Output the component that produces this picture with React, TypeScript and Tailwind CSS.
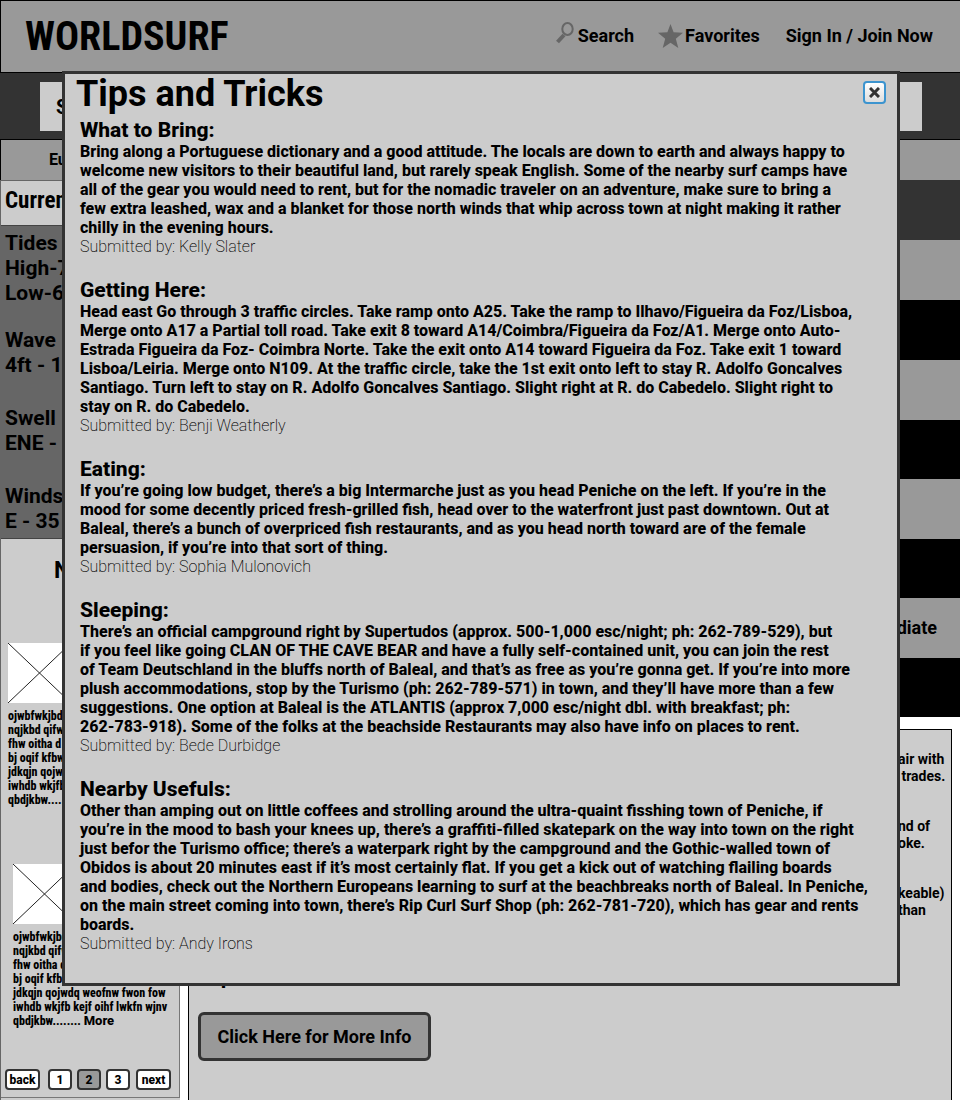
import React from 'react';

const tips = [
  {
    title: 'What to Bring:',
    author: 'Kelly Slater',
    body: `Bring along a Portuguese dictionary and a good attitude. The locals are down to earth and always happy to
welcome new visitors to their beautiful land, but rarely speak English. Some of the nearby surf camps have
all of the gear you would need to rent, but for the nomadic traveler on an adventure, make sure to bring a
few extra leashed, wax and a blanket for those north winds that whip across town at night making it rather
chilly in the evening hours.`,
  },
  {
    title: 'Getting Here:',
    author: 'Benji Weatherly',
    body: `Head east Go through 3 traffic circles. Take ramp onto A25. Take the ramp to Ilhavo/Figueira da Foz/Lisboa,
Merge onto A17 a Partial toll road. Take exit 8 toward A14/Coimbra/Figueira da Foz/A1. Merge onto Auto-
Estrada Figueira da Foz- Coimbra Norte. Take the exit onto A14 toward Figueira da Foz. Take exit 1 toward
Lisboa/Leiria. Merge onto N109. At the traffic circle, take the 1st exit onto left to stay R. Adolfo Goncalves
Santiago. Turn left to stay on R. Adolfo Goncalves Santiago. Slight right at R. do Cabedelo. Slight right to
stay on R. do Cabedelo.`,
  },
  {
    title: 'Eating:',
    author: 'Sophia Mulonovich',
    body: `If you’re going low budget, there’s a big Intermarche just as you head Peniche on the left. If you’re in the
mood for some decently priced fresh-grilled fish, head over to the waterfront just past downtown. Out at
Baleal, there’s a bunch of overpriced fish restaurants, and as you head north toward are of the female
persuasion, if you’re into that sort of thing.`,
  },
  {
    title: 'Sleeping:',
    author: 'Bede Durbidge',
    body: `There’s an official campground right by Supertudos (approx. 500-1,000 esc/night; ph: 262-789-529), but
if you feel like going CLAN OF THE CAVE BEAR and have a fully self-contained unit, you can join the rest
of Team Deutschland in the bluffs north of Baleal, and that’s as free as you’re gonna get. If you’re into more
plush accommodations, stop by the Turismo (ph: 262-789-571) in town, and they’ll have more than a few
suggestions. One option at Baleal is the ATLANTIS (approx 7,000 esc/night dbl. with breakfast; ph:
262-783-918). Some of the folks at the beachside Restaurants may also have info on places to rent.`,
  },
  {
    title: 'Nearby Usefuls:',
    author: 'Andy Irons',
    body: `Other than amping out on little coffees and strolling around the ultra-quaint fisshing town of Peniche, if
you’re in the mood to bash your knees up, there’s a graffiti-filled skatepark on the way into town on the right
just befor the Turismo office; there’s a waterpark right by the campground and the Gothic-walled town of
Obidos is about 20 minutes east if it’s most certainly flat. If you get a kick out of watching flailing boards
and bodies, check out the Northern Europeans learning to surf at the beachbreaks north of Baleal. In Peniche,
on the main street coming into town, there’s Rip Curl Surf Shop (ph: 262-781-720), which has gear and rents
boards.`,
  },
];

const conditions = [
  ['Tides', 'High-7', 'Low-6'],
  ['Wave', '4ft - 10'],
  ['Swell', 'ENE - 9'],
  ['Winds', 'E - 35'],
];

const newsText = `ojwbfwkjbd
nqjkbd qifw
fhw oitha d
bj oqif kfbw
jdkqjn qojwdq weofnw fwon fow
iwhdb wkjfb kejf oihf lwkfn wjnv
qbdjkbw........ `;

const notes = ['air with\n trades.', 'nd of\noke.', 'keable)\nthan'];

function NewsItem({ indent }: { indent: string }) {
  return (
    <article className={indent}>
      <svg className="block h-[60px] w-[63px] bg-white" viewBox="0 0 63 60" aria-hidden="true">
        <path d="M0 0 63 60M0 60 63 0" stroke="#222" strokeWidth="1" />
      </svg>
      <p className="mt-[6px] h-[101px] whitespace-pre font-['Roboto_Condensed','Roboto'] text-[12px] leading-[14px] font-extrabold">
        {newsText}
        <a href="#news" className="font-['Roboto'] text-[13px]">More</a>
      </p>
    </article>
  );
}

function PageButton({ label, active = false }: { label: string; active?: boolean }) {
  const tone = active ? 'bg-[#999]' : 'bg-white';
  return (
    <button className={`h-[21px] rounded-[4px] border-2 border-[#333] text-[12px] leading-[16px] font-extrabold ${tone} ${label.length > 1 ? 'w-[35px]' : 'w-6'}`}>
      {label}
    </button>
  );
}

function Header() {
  return (
    <header className="flex h-[72px] items-center justify-between border-t border-l border-black bg-[#999] pr-[27px] pl-6">
      <a href="#home" className="font-['Roboto_Condensed','Liberation_Sans_Narrow'] text-[40px] font-bold">WORLDSURF</a>
      <nav className="flex items-center pb-[2px] text-[18px] font-bold">
        <a href="#search" className="flex items-center gap-1">
          <svg className="mb-[6px] h-[22px] w-[18px]" viewBox="0 0 18 22" fill="none" stroke="#666" aria-hidden="true">
            <ellipse cx="11.5" cy="7" rx="5.2" ry="6" strokeWidth="2" />
            <path d="M8 13 1.500 20" strokeWidth="4" />
          </svg>
          Search
        </a>
        <a href="#favorites" className="ml-6 flex items-center gap-[2px]">
          <svg className="h-[24px] w-[25px]" viewBox="0 0 25 24" fill="#666" aria-hidden="true">
            <path d="m12.5 0 3.100 8.300 9.400.5-7.200 6 2.500 9.200-7.800-5.300L4.700 24l2.500-9.200L0 8.800l9.400-.5z" />
          </svg>
          Favorites
        </a>
        <a href="#signin" className="ml-[26px]">Sign In / Join Now</a>
      </nav>
    </header>
  );
}

function Sidebar() {
  return (
    <aside className="flex w-[180px] shrink-0 flex-col border-l border-[#666] bg-[#ccc]">
      <h2 className="h-[45px] border-t border-[#666] pl-1 font-['Roboto_Condensed','Roboto'] text-[23px] leading-[40px] font-bold">Current</h2>
      <div className="flex h-[314px] flex-col gap-[28px] border-y border-[#444] bg-[#666] pt-[5px] pl-1 text-[21px] leading-[25px] font-bold">
        {conditions.map((lines, i) => (
          <p key={lines[0]} className={i === 0 ? '-mb-[6px]' : ''}>
            {lines.map((line) => <span key={line} className="block whitespace-nowrap">{line}</span>)}
          </p>
        ))}
      </div>
      <div className="flex h-[559px] flex-col border-r border-b border-[#777]">
        <h2 className="pt-[17px] pl-[53px] text-[23px] leading-[30px] font-bold">News</h2>
        <div className="mt-[57px] flex flex-col gap-[54px]">
          <NewsItem indent="pl-[7px]" />
          <NewsItem indent="pl-3" />
        </div>
        <div className="mt-auto mb-[7px] flex items-center pl-1">
          <PageButton label="back" />
          <div className="mr-[6px] ml-2 flex gap-[5px]">
            <PageButton label="1" />
            <PageButton label="2" active />
            <PageButton label="3" />
          </div>
          <PageButton label="next" />
        </div>
      </div>
    </aside>
  );
}

function MainColumn() {
  return (
    <main className="flex flex-1 flex-col bg-white">
      <div className="grid h-[537px] grid-rows-[60px_60px_60px_repeat(6,minmax(0,1fr))] text-[18px] font-bold">
        <div className="bg-[#333]" />
        <div className="bg-[#999]" />
        <div className="bg-black" />
        <div className="bg-[#999]" />
        <div className="bg-black" />
        <div className="bg-[#999]" />
        <div className="bg-black" />
        <div className="flex items-center justify-end bg-[#999] pr-[23px]">Intermediate</div>
        <div className="bg-black" />
      </div>
      <section className="mt-3 mr-2 ml-2 flex flex-1 flex-col border border-b-0 border-black bg-[#ccc]">
        <div className="flex flex-col items-end gap-[33px] pt-[21px] text-[14px] leading-[17px] font-bold">
          {notes.map((note) => <p key={note} className="w-[53px] whitespace-pre">{note}</p>)}
        </div>
        <h2 className="mt-[44px] pl-[5px] text-[22px] leading-[26px] font-bold">Trip</h2>
        <button className="mt-[23px] ml-[9px] h-[49px] w-[233px] rounded-[6px] border-[3px] border-[#333] bg-[#999] text-[18px] font-bold">
          Click Here for More Info
        </button>
      </section>
    </main>
  );
}

function TipsDialog() {
  return (
    <div className="absolute inset-x-0 top-[71px] pr-[60px] pl-[62px]">
      <div role="dialog" aria-labelledby="tips-title" className="border-[3px] border-[#333] bg-[#ccc] pb-[30px]">
        <div className="flex items-start justify-between pr-[11px] pl-[11px]">
          <h1 id="tips-title" className="text-[36px] leading-[40px] font-bold">Tips and Tricks</h1>
          <button aria-label="Close" className="mt-[7px] flex size-[23px] items-center justify-center rounded-[4px] border-2 border-[#3c94cf] bg-linear-to-b from-white to-[#ddd]">
            <svg className="size-[11px]" viewBox="0 0 11 11" stroke="#333" strokeWidth="3" aria-hidden="true">
              <path d="m1 1 9 9M10 1 1 10" />
            </svg>
          </button>
        </div>
        <div className="mt-[5px] flex flex-col gap-[23px] pl-[15px] text-[16px] leading-[19px]">
          {tips.map((tip) => (
            <section key={tip.title}>
              <h2 className="text-[21px] leading-[23px] font-extrabold">{tip.title}</h2>
              <p className="font-extrabold whitespace-pre-line">{tip.body}</p>
              <p className="font-extralight">Submitted by: {tip.author}</p>
            </section>
          ))}
        </div>
      </div>
    </div>
  );
}

export default function App() {
  return (
    <div className="relative flex min-h-screen flex-col overflow-hidden bg-white font-['Roboto',sans-serif] text-black">
      <Header />
      <div className="h-[68px] border-y border-black bg-[#333] pt-[9px] pr-[38px] pl-10">
        <input aria-label="Search spots" defaultValue="Search" className="block h-[49px] w-full bg-[#ccc] px-4 text-[20px] font-bold" />
      </div>
      <nav className="flex h-10 items-center border-l border-black bg-[#999] pl-12 text-[16px] font-bold">
        <a href="#europe">Europe</a>
      </nav>
      <div className="flex flex-1">
        <Sidebar />
        <MainColumn />
      </div>
      <TipsDialog />
    </div>
  );
}
